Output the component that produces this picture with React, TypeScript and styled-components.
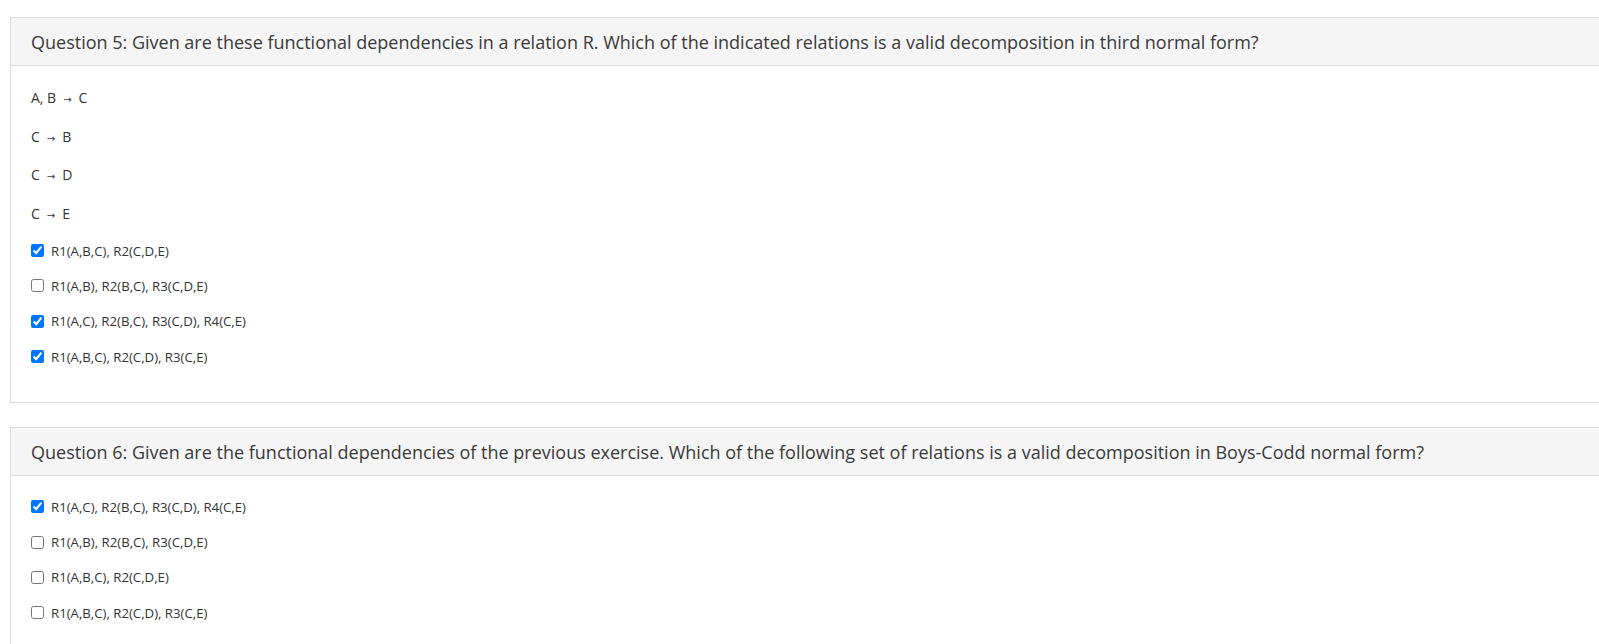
import React from "react";
import styled, { createGlobalStyle } from "styled-components";

const GlobalStyle = createGlobalStyle`
  html, body {
    margin: 0;
    padding: 0;
    background: #ffffff;
    overflow-x: hidden;
  }
  body {
    font-family: "Open Sans", "Noto Sans", Arial, sans-serif;
    color: #333333;
  }
`;

const Page = styled.div`
  display: flex;
  flex-direction: column;
  gap: 24px;
  padding: 17px 0 0 10px;
`;

const Card = styled.section`
  border: 1px solid #dddddd;
  background: #ffffff;
  margin-right: -40px;
`;

const CardHeader = styled.div`
  display: flex;
  align-items: center;
  height: 47px;
  padding: 0 20px;
  background: #f5f5f5;
  border-bottom: 1px solid #dddddd;
  font-size: 18px;
  color: #3a3a3a;
  white-space: nowrap;
`;

const CardBody = styled.div<{ $bottom: number }>`
  display: flex;
  flex-direction: column;
  padding: 13px 20px ${(p) => p.$bottom}px;
`;

const Dependency = styled.div`
  display: flex;
  align-items: baseline;
  height: 38.5px;
  line-height: 38.5px;
  font-size: 14px;
  color: #333333;
`;

const Arrow = styled.span`
  display: inline-block;
  margin: 0 7px;
  font-family: "DejaVu Sans", sans-serif;
  font-size: 10px;
`;

const OptionRow = styled.label`
  display: flex;
  align-items: center;
  height: 35.3px;
  font-size: 13.2px;
  color: #333333;
`;

const Box = styled.input`
  width: 13px;
  height: 13px;
  margin: 0 7px 0 0;
  accent-color: #0075ff;
`;

type Option = { text: string; checked: boolean };

const q5deps: [string, string][] = [
  ["A, B", "C"],
  ["C", "B"],
  ["C", "D"],
  ["C", "E"],
];

const q5opts: Option[] = [
  { text: "R1(A,B,C), R2(C,D,E)", checked: true },
  { text: "R1(A,B), R2(B,C), R3(C,D,E)", checked: false },
  { text: "R1(A,C), R2(B,C), R3(C,D), R4(C,E)", checked: true },
  { text: "R1(A,B,C), R2(C,D), R3(C,E)", checked: true },
];

const q6opts: Option[] = [
  { text: "R1(A,C), R2(B,C), R3(C,D), R4(C,E)", checked: true },
  { text: "R1(A,B), R2(B,C), R3(C,D,E)", checked: false },
  { text: "R1(A,B,C), R2(C,D,E)", checked: false },
  { text: "R1(A,B,C), R2(C,D), R3(C,E)", checked: false },
];

function Options({ items }: { items: Option[] }) {
  return (
    <>
      {items.map((o, i) => (
        <OptionRow key={i}>
          <Box type="checkbox" defaultChecked={o.checked} />
          {o.text}
        </OptionRow>
      ))}
    </>
  );
}

export default function App() {
  return (
    <>
      <GlobalStyle />
      <Page>
        <Card>
          <CardHeader>
            Question 5: Given are these functional dependencies in a relation R. Which of the indicated relations is a valid decomposition in third normal form?
          </CardHeader>
          <CardBody $bottom={28}>
            {q5deps.map(([l, r], i) => (
              <Dependency key={i}>
                {l}
                <Arrow>→</Arrow>
                {r}
              </Dependency>
            ))}
            <Options items={q5opts} />
          </CardBody>
        </Card>
        <Card>
          <CardHeader>
            Question 6: Given are the functional dependencies of the previous exercise. Which of the following set of relations is a valid decomposition in Boys-Codd normal form?
          </CardHeader>
          <CardBody $bottom={28}>
            <Options items={q6opts} />
          </CardBody>
        </Card>
      </Page>
    </>
  );
}
